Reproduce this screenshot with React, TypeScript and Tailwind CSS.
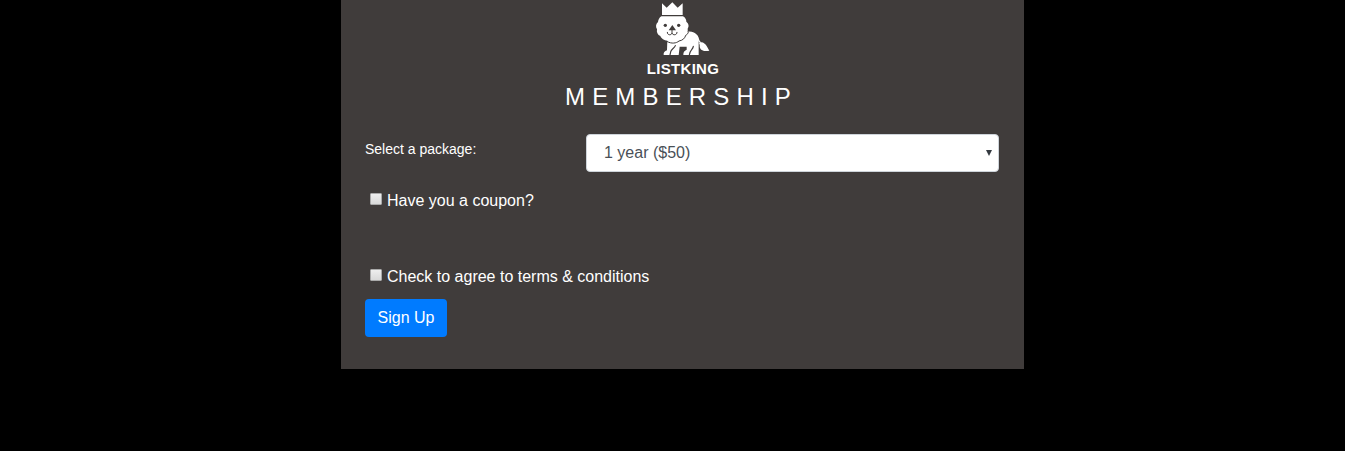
import { useState } from 'react';

function LionLogo() {
  return (
    <svg viewBox="0 0 270 174" className="ml-[5px] h-[58px] w-[90px] shrink-0" aria-label="ListKing">
      <g fill="#fff">
        <path d="M66 10 80 23 97 7 113 23 128 10V45H66Z" />
        <path d="M136 96C150 92 165 95 172 106C176 113 176 121 176 130V165H130C130 156 132 153 140 149V140H119L116 165H71C70 158 74 153 81 151L82 120Z" />
        <path d="M179 128C188 124 195 131 200 138L208 152C196 155 184 153 180 144C178 138 181 133 177 131Z" />
      </g>
      <path
        d="M64 49H129C136 53 139 59 139 65C146 70 148 78 143 86C145 95 140 102 133 105C130 115 123 119 115 120C105 129 92 128 84 122C74 123 64 116 61 108C53 105 49 97 51 88C46 80 48 71 54 66C55 59 58 53 64 49Z"
        fill="#fff"
      />
      <path d="M171 108C176 115 174 125 182 128" fill="none" stroke="#fff" strokeWidth="4" />
      <g fill="#403c3b">
        <circle cx="76" cy="76" r="5" />
        <circle cx="116" cy="76" r="5" />
        <path d="M97 75 108 91H86Z" />
      </g>
      <g fill="none" stroke="#403c3b" strokeWidth="3" strokeLinecap="round">
        <path d="M96 91V98M82 97C81 106 94 107 96 99C98 107 112 106 111 97" />
        <path d="M82 125C95 132 109 130 117 123C129 121 135 114 137 106C142 103 145 100 145 96" />
        <path d="M106 137C103 145 93 147 92 156L90 165M160 139C159 149 149 149 148 165" strokeWidth="3.5" />
      </g>
    </svg>
  );
}

function CheckRow({ label }: { label: string }) {
  const [checked, setChecked] = useState(false);
  return (
    <label className="flex h-6 items-center pl-[5px] text-base text-white">
      <input
        type="checkbox"
        checked={checked}
        onChange={() => setChecked(!checked)}
        className="mr-[5px] mb-[5px] size-3 appearance-none rounded-[1px] border border-[#aaa] bg-linear-to-b from-[#eee] to-[#d9d9d9] checked:bg-[#007bff]"
      />
      {label}
    </label>
  );
}

export default function App() {
  return (
    <main className="flex min-h-screen items-start justify-center bg-black pl-5 font-['Liberation_Sans',Arial,sans-serif]">
      <section className="h-[369px] w-[683px] bg-[#403c3b] px-6">
        <header className="flex flex-col items-center text-white">
          <LionLogo />
          <div className="mt-px h-5 pl-px text-[15px] leading-5 font-bold tracking-[0.3px]">LISTKING</div>
          <h1 className="mt-[3px] mr-[2px] h-[29px] text-2xl leading-[29px] tracking-[7.15px]">MEMBERSHIP</h1>
        </header>
        <form onSubmit={(e) => e.preventDefault()}>
          <div className="mt-[23px] flex">
            <label className="w-[221px] pt-[5px] text-sm leading-[21px] text-white">Select a package:</label>
            <div className="flex h-[38px] w-[413px] items-center justify-between rounded border border-[#ced4da] bg-white pr-[6px] pl-[17px] text-base text-[#495057]">
              <span>1 year ($50)</span>
              <svg viewBox="0 0 6 6" className="h-[6px] w-[6px]">
                <path d="M0 0H6L3 6Z" fill="#343a40" />
              </svg>
            </div>
          </div>
          <div className="mt-[17px]">
            <CheckRow label="Have you a coupon?" />
          </div>
          <div className="mt-[52px]">
            <CheckRow label="Check to agree to terms & conditions" />
          </div>
          <button className="mt-[10px] block h-[38px] w-[82px] rounded bg-[#007bff] text-base text-white">Sign Up</button>
        </form>
      </section>
    </main>
  );
}
